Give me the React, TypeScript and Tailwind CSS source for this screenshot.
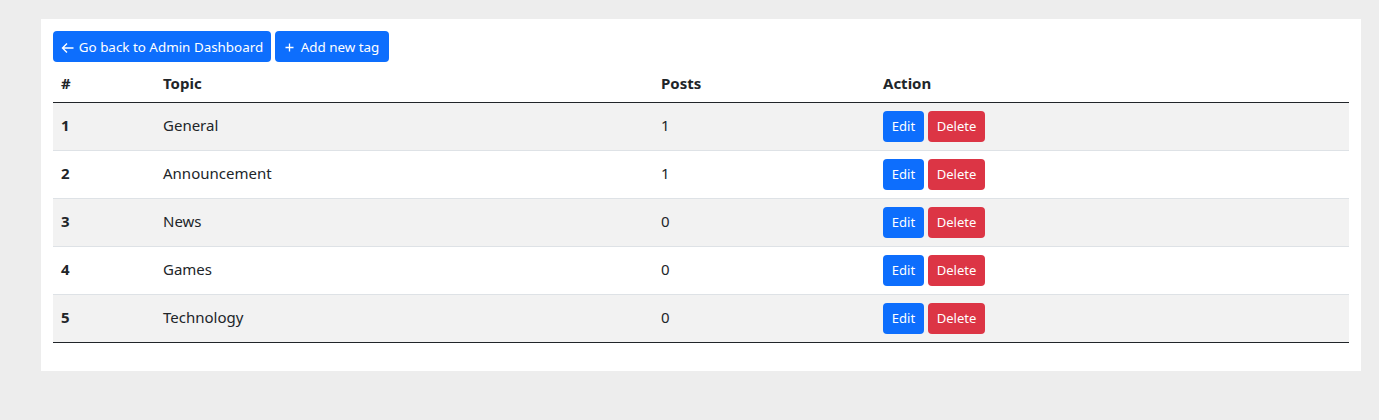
const tags = [
  { id: 1, topic: 'General', posts: 1 },
  { id: 2, topic: 'Announcement', posts: 1 },
  { id: 3, topic: 'News', posts: 0 },
  { id: 4, topic: 'Games', posts: 0 },
  { id: 5, topic: 'Technology', posts: 0 },
];

function ArrowLeft() {
  return (
    <svg width="13" height="12" viewBox="0 0 13 12" fill="none" stroke="currentColor" strokeWidth="1.4">
      <path d="M12.5 6H1.5M6 1.5L1.5 6L6 10.5" />
    </svg>
  );
}

function Plus() {
  return (
    <svg width="9" height="9" viewBox="0 0 9 9" fill="none" stroke="currentColor" strokeWidth="1.3">
      <path d="M4.5 0.5V8.5M0.5 4.5H8.5" />
    </svg>
  );
}

export default function App() {
  return (
    <div className="min-h-[420px] bg-[#ededed] pt-[19px] pl-[41px] pr-[18px] font-['Noto_Sans',sans-serif] text-[#212529]">
      <div className="bg-white px-3 pt-3 pb-7">
        <div className="flex gap-1">
          <button className="flex h-[31px] w-[218px] items-center justify-center gap-[5px] rounded-[4px] bg-[#0d6efd] pt-0.5 text-[13.4px] text-white">
            <ArrowLeft />
            <span>Go back to Admin Dashboard</span>
          </button>
          <button className="flex h-[31px] w-[114px] items-center justify-center gap-[7px] rounded-[4px] bg-[#0d6efd] pt-0.5 text-[13.4px] text-white">
            <Plus />
            <span>Add new tag</span>
          </button>
        </div>
        <table className="w-full border-collapse text-[15px]">
          <thead>
            <tr className="h-10 border-b border-[#212529]">
              <th className="w-[102px] px-2 pt-0.5 text-left font-bold">#</th>
              <th className="w-[498px] px-2 pt-0.5 text-left font-bold">Topic</th>
              <th className="w-[222px] px-2 pt-0.5 text-left font-bold">Posts</th>
              <th className="px-2 pt-0.5 text-left font-bold">Action</th>
            </tr>
          </thead>
          <tbody>
            {tags.map((t, i) => (
              <tr
                key={t.id}
                className={`h-12 ${i === tags.length - 1 ? 'border-b border-[#212529]' : 'border-b border-[#dee2e6]'} ${i % 2 === 0 ? 'bg-[#f2f2f2]' : 'bg-white'}`}
              >
                <td className="px-2 pb-0.5 font-bold">{t.id}</td>
                <td className="px-2 pb-0.5">{t.topic}</td>
                <td className="px-2 pb-0.5">{t.posts}</td>
                <td className="px-2">
                  <div className="flex gap-1">
                    <button className="h-[31px] w-[41px] rounded-[4px] bg-[#0d6efd] pt-0.5 text-[13px] text-white">Edit</button>
                    <button className="h-[31px] w-[57px] rounded-[4px] bg-[#dc3545] pt-0.5 text-[13px] text-white">Delete</button>
                  </div>
                </td>
              </tr>
            ))}
          </tbody>
        </table>
      </div>
    </div>
  );
}
